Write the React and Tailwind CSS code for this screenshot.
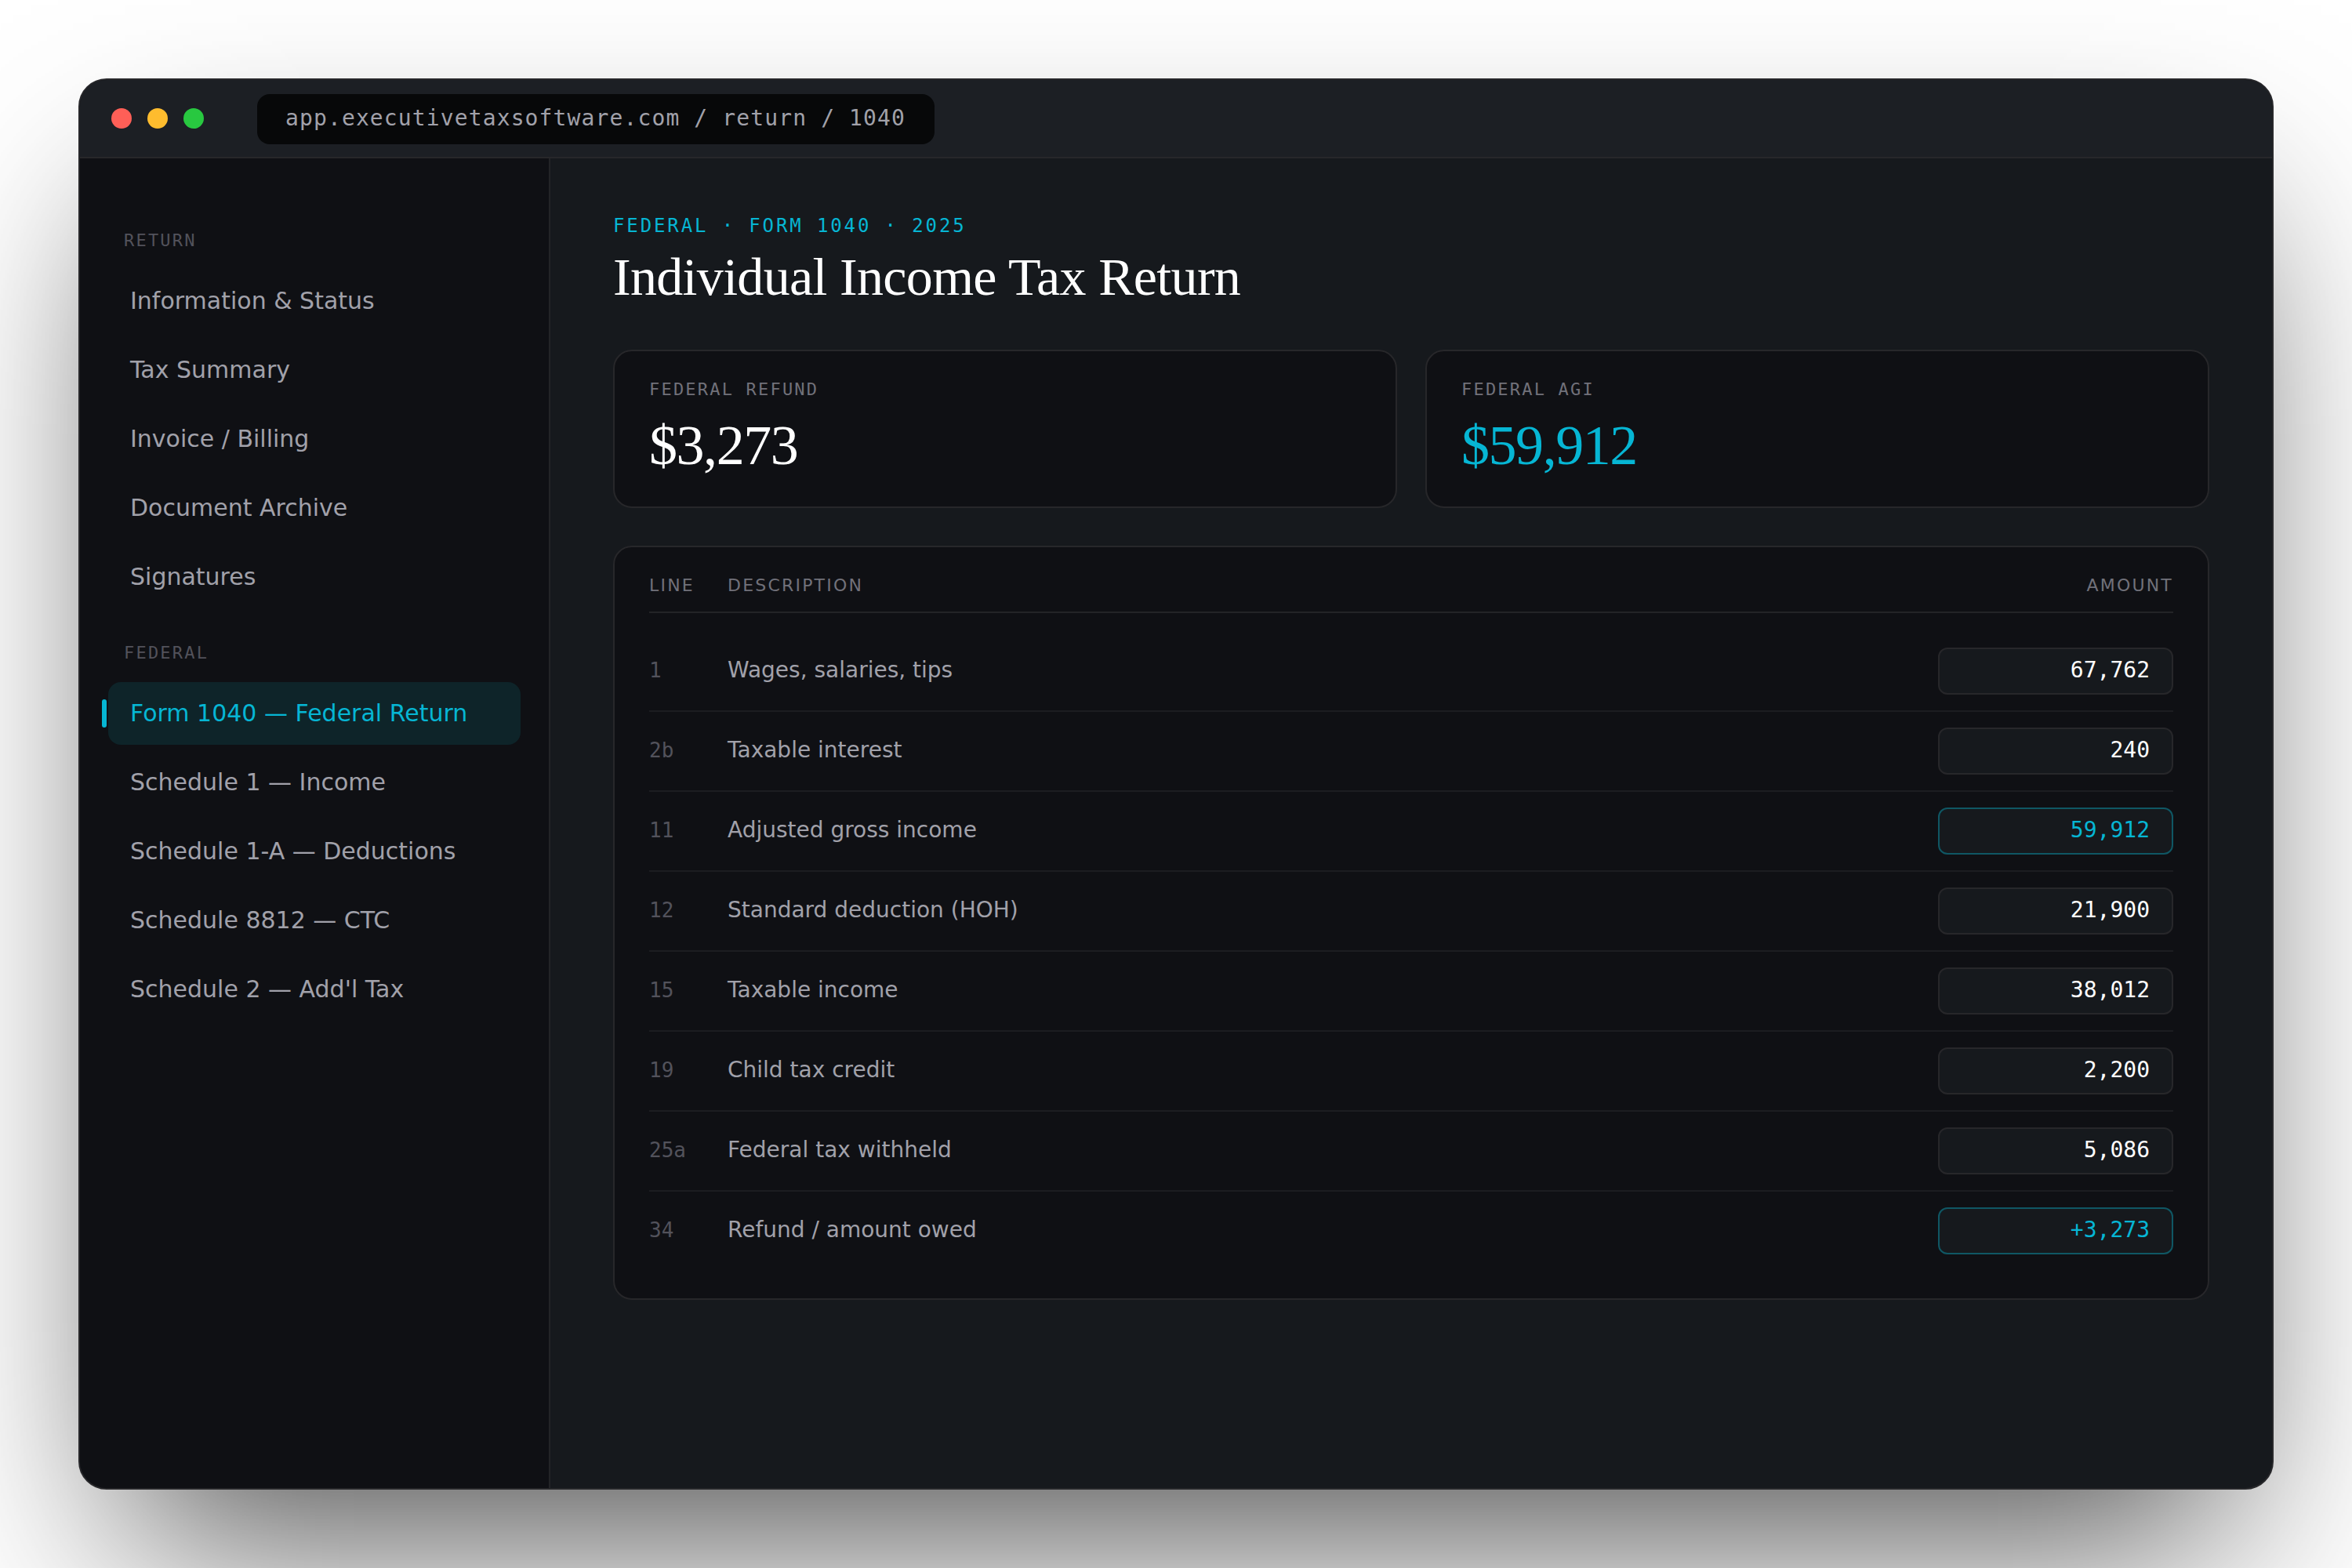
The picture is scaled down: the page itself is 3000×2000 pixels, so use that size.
const navGroups = [
  {
    title: "RETURN",
    items: ["Information & Status", "Tax Summary", "Invoice / Billing", "Document Archive", "Signatures"],
  },
  {
    title: "FEDERAL",
    items: [
      "Form 1040 — Federal Return",
      "Schedule 1 — Income",
      "Schedule 1-A — Deductions",
      "Schedule 8812 — CTC",
      "Schedule 2 — Add'l Tax",
    ],
  },
];

const rows = [
  { line: "1", label: "Wages, salaries, tips", amount: "67,762" },
  { line: "2b", label: "Taxable interest", amount: "240" },
  { line: "11", label: "Adjusted gross income", amount: "59,912", accent: true },
  { line: "12", label: "Standard deduction (HOH)", amount: "21,900" },
  { line: "15", label: "Taxable income", amount: "38,012" },
  { line: "19", label: "Child tax credit", amount: "2,200" },
  { line: "25a", label: "Federal tax withheld", amount: "5,086" },
  { line: "34", label: "Refund / amount owed", amount: "+3,273", accent: true },
];

function TitleBar() {
  return (
    <div className="flex h-[100px] shrink-0 items-center border-b-2 border-[#27272a] bg-[#1c1f24] pl-10">
      <div className="flex gap-5">
        <span className="size-[26px] rounded-full bg-[#ff5f57]" />
        <span className="size-[26px] rounded-full bg-[#febc2e]" />
        <span className="size-[26px] rounded-full bg-[#28c840]" />
      </div>
      <div className="mt-[2px] ml-[68px] flex h-16 w-[864px] items-center rounded-[16px] bg-[#070809] px-9 pb-[3px] font-['DejaVu_Sans_Mono',monospace] text-[28px] leading-[33px] tracking-[0.04em] whitespace-nowrap text-[#a1a1aa]">
        app.executivetaxsoftware.com / return / 1040
      </div>
    </div>
  );
}

function NavItem({ label, active }) {
  return (
    <div
      className={`relative mb-2 h-20 rounded-[16px] pt-[22px] pl-7 text-[30px] leading-[35px] whitespace-nowrap ${
        active ? "bg-[#0e2429] text-[#06b6d4]" : "text-[#a1a1aa]"
      }`}
    >
      {active && <span className="absolute top-[22px] -left-2 h-9 w-1.5 rounded-[4px] bg-[#06b6d4]" />}
      {label}
    </div>
  );
}

function Sidebar() {
  return (
    <div className="w-[600px] shrink-0 border-r-2 border-[#232427] bg-[#0f1014] px-9 pt-[88px]">
      {navGroups.map((group) => (
        <div key={group.title} className="mb-10">
          <div className="mb-[21px] ml-5 font-['DejaVu_Sans_Mono',monospace] text-[22px] leading-[33px] tracking-[0.1em] text-[#52525b]">
            {group.title}
          </div>
          {group.items.map((item) => (
            <NavItem key={item} label={item} active={item.startsWith("Form 1040")} />
          ))}
        </div>
      ))}
    </div>
  );
}

function StatCard({ label, value, accent }) {
  return (
    <div className="h-[202px] flex-1 rounded-[24px] border-2 border-[#27272a] bg-[#0f1014] px-11 pt-[33px]">
      <div className="font-['DejaVu_Sans_Mono',monospace] text-[22px] leading-[31px] tracking-[0.1em] text-[#71717a]">
        {label}
      </div>
      <div
        className={`mt-4 font-['Liberation_Serif',serif] text-[72px] leading-[80px] tracking-[-0.02em] ${
          accent ? "text-[#06b6d4]" : "text-white"
        }`}
      >
        {value}
      </div>
    </div>
  );
}

function LinesTable() {
  return (
    <div className="mt-12 h-[962px] rounded-[24px] border-2 border-[#27272a] bg-[#0f1014] px-11">
      <div className="flex h-[84px] items-start border-b-2 border-[#232427] pt-[33px] text-[22px] leading-[31px] tracking-[0.1em] text-[#71717a]">
        <span className="w-[100px]">LINE</span>
        <span className="flex-1">DESCRIPTION</span>
        <span>AMOUNT</span>
      </div>
      <div className="pt-6">
        {rows.map((row) => (
          <div key={row.line} className="flex h-[102px] items-center border-b-2 border-[#1c1d21] last:border-transparent">
            <span className="w-[100px] pb-[2px] font-['DejaVu_Sans_Mono',monospace] text-[26px] leading-[30px] text-[#52525b]">
              {row.line}
            </span>
            <span className="flex-1 pb-[3px] text-[28px] leading-[33px] text-[#a1a1aa]">{row.label}</span>
            <span
              className={`flex h-[60px] w-[300px] items-center justify-end rounded-[12px] border-2 bg-[#16191d] pr-7 pb-[3px] font-['DejaVu_Sans_Mono',monospace] text-[28px] leading-[33px] ${
                row.accent ? "border-[#0f5764] text-[#06b6d4]" : "border-[#27272a] text-white"
              }`}
            >
              {row.amount}
            </span>
          </div>
        ))}
      </div>
    </div>
  );
}

export default function App() {
  return (
    <div className="h-[2000px] w-[3000px] overflow-hidden bg-white p-[100px] font-['DejaVu_Sans',sans-serif]">
      <div className="flex h-[1800px] w-[2800px] flex-col overflow-hidden rounded-[36px] border-2 border-[#27272a] bg-[#16191d] shadow-[0_120px_240px_-60px_rgba(0,0,0,0.7)]">
        <TitleBar />
        <div className="flex min-h-0 flex-1">
          <Sidebar />
          <div className="flex-1 px-20 pt-[68px]">
            <div className="font-['DejaVu_Sans_Mono',monospace] text-[24px] leading-[36px] tracking-[0.12em] text-[#06b6d4]">
              FEDERAL · FORM 1040 · 2025
            </div>
            <div className="mt-[7px] font-['Liberation_Serif',serif] text-[68px] leading-[80px] tracking-[-0.01em] text-white">
              Individual Income Tax Return
            </div>
            <div className="mt-[53px] flex gap-9">
              <StatCard label="FEDERAL REFUND" value="$3,273" />
              <StatCard label="FEDERAL AGI" value="$59,912" accent />
            </div>
            <LinesTable />
          </div>
        </div>
      </div>
    </div>
  );
}
